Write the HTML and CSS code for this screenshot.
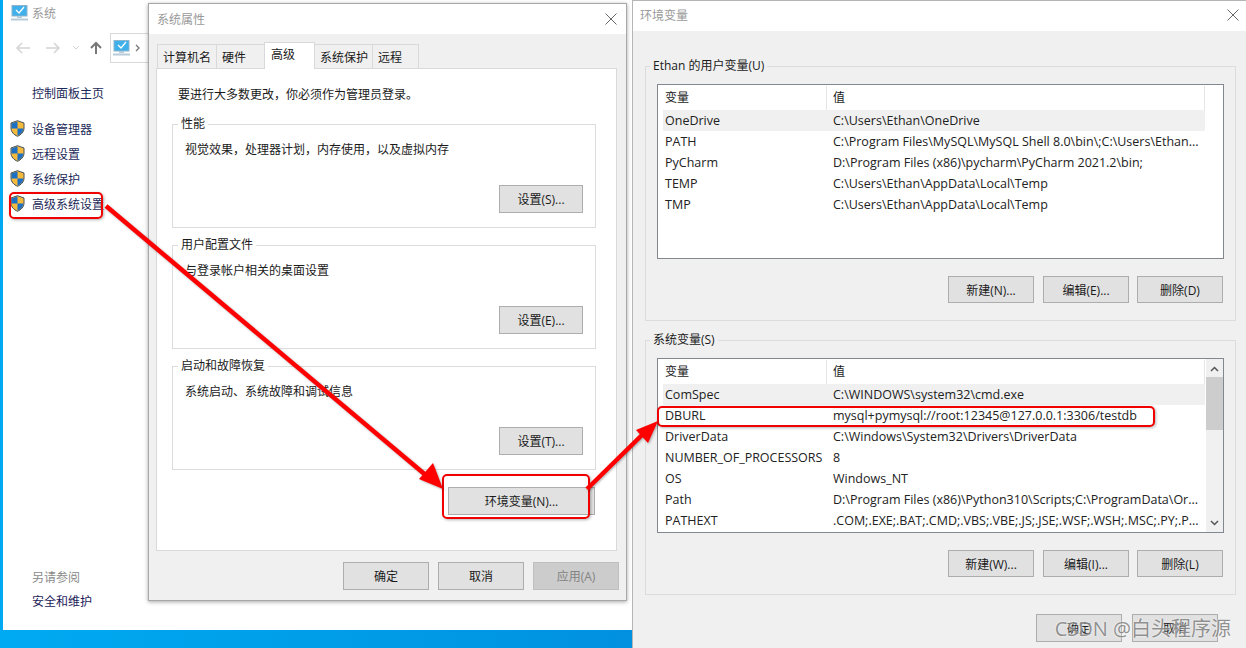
FILE: index.html
```html
<!DOCTYPE html>
<html lang="zh-CN">
<head>
    <meta charset="UTF-8">
    <title>环境变量</title>
    <link rel="stylesheet" href="styles.css">
</head>
<body>
<div class="desktop">

    <!-- 系统 window behind the dialogs -->
    <div class="window system-window">
        <div class="sys-title">
            <svg class="pc-icon" width="17" height="16" viewBox="0 0 17 16"><rect x="1" y="0.5" width="15" height="10.5" fill="#3fb0ea" stroke="#8fb4cc"/><path d="M5 5l3 3 5-6" fill="none" stroke="#fff" stroke-width="1.300"/><rect x="6" y="11" width="5" height="2" fill="#b7cbd8"/><rect x="0" y="13.5" width="17" height="2" fill="#b7cbd8"/></svg>
            <span>系统</span>
        </div>
        <div class="sys-nav">
            <svg width="100" height="16" viewBox="0 0 100 16">
                <path d="M27 8H14M19 3l-5 5 5 5M43 8h13M51 3l5 5-5 5" fill="none" stroke="#d4d4d4" stroke-width="1.5"/>
                <path d="M70 6l3 3 3-3" fill="none" stroke="#d4d4d4"/>
                <path d="M93 14V3M88 8l5-5 5 5" fill="none" stroke="#777" stroke-width="2"/>
            </svg>
            <div class="crumb">
                <svg width="17" height="16" viewBox="0 0 17 16"><rect x="1" y="0.5" width="15" height="10.5" fill="#3fb0ea" stroke="#8fb4cc"/><path d="M5 5l3 3 5-6" fill="none" stroke="#fff" stroke-width="1.300"/><rect x="6" y="11" width="5" height="2" fill="#b7cbd8"/><rect x="0" y="13.5" width="17" height="2" fill="#b7cbd8"/></svg>
                <svg width="6" height="8" viewBox="0 0 6 8"><path d="M1 1l3 3-3 3" fill="none" stroke="#777" stroke-width="1.3"/></svg>
            </div>
        </div>
        <div class="side-home">控制面板主页</div>
        <ul class="side-list">
            <li><svg class="shield" width="15" height="17" viewBox="0 0 15 17"><path d="M7.5.7L14 3v5c0 4-3 6.800-6.500 8.300C4 14.800 1 12 1 8V3z" fill="#f5b93b" stroke="#44505c"/><path d="M7.500 1.500V8.500H1.500V3.400zM7.500 8.500H13.500C13 12 10.500 14.500 7.500 15.800z" fill="#1b6fc4"/></svg>设备管理器</li>
            <li><svg class="shield" width="15" height="17" viewBox="0 0 15 17"><path d="M7.5.7L14 3v5c0 4-3 6.800-6.500 8.300C4 14.800 1 12 1 8V3z" fill="#f5b93b" stroke="#44505c"/><path d="M7.500 1.500V8.500H1.500V3.400zM7.500 8.500H13.500C13 12 10.500 14.500 7.500 15.800z" fill="#1b6fc4"/></svg>远程设置</li>
            <li><svg class="shield" width="15" height="17" viewBox="0 0 15 17"><path d="M7.5.7L14 3v5c0 4-3 6.800-6.500 8.300C4 14.800 1 12 1 8V3z" fill="#f5b93b" stroke="#44505c"/><path d="M7.500 1.500V8.500H1.500V3.400zM7.500 8.500H13.500C13 12 10.500 14.500 7.500 15.800z" fill="#1b6fc4"/></svg>系统保护</li>
            <li><svg class="shield" width="15" height="17" viewBox="0 0 15 17"><path d="M7.5.7L14 3v5c0 4-3 6.800-6.500 8.300C4 14.800 1 12 1 8V3z" fill="#f5b93b" stroke="#44505c"/><path d="M7.500 1.500V8.500H1.500V3.400zM7.500 8.500H13.500C13 12 10.500 14.500 7.500 15.800z" fill="#1b6fc4"/></svg>高级系统设置</li>
        </ul>
        <div class="side-foot">
            <div class="see-also">另请参阅</div>
            <div class="foot-link">安全和维护</div>
        </div>
    </div>

    <!-- 系统属性 -->
    <div class="window props-dialog">
        <div class="title-bar">
            <span>系统属性</span>
            <svg class="close-x" width="12" height="12" viewBox="0 0 12 12"><path d="M.5.5l11 11M11.500.5l-11 11" stroke="#666" fill="none"/></svg>
        </div>
        <div class="props-body">
            <div class="tabs">
                <div class="tab tab-name">计算机名</div>
                <div class="tab tab-hw">硬件</div>
                <div class="tab tab-active">高级</div>
                <div class="tab tab-prot">系统保护</div>
                <div class="tab tab-remote">远程</div>
            </div>
            <div class="tab-panel">
                <p class="admin-note">要进行大多数更改，你必须作为管理员登录。</p>
                <fieldset class="prop-group first-group">
                    <legend>性能</legend>
                    <p>视觉效果，处理器计划，内存使用，以及虚拟内存</p>
                    <button class="btn">设置(S)...</button>
                </fieldset>
                <fieldset class="prop-group">
                    <legend>用户配置文件</legend>
                    <p>与登录帐户相关的桌面设置</p>
                    <button class="btn">设置(E)...</button>
                </fieldset>
                <fieldset class="prop-group">
                    <legend>启动和故障恢复</legend>
                    <p>系统启动、系统故障和调试信息</p>
                    <button class="btn">设置(T)...</button>
                </fieldset>
                <div class="env-row"><button class="btn env-btn">环境变量(N)...</button></div>
            </div>
            <div class="dialog-actions">
                <button class="btn">确定</button>
                <button class="btn">取消</button>
                <button class="btn btn-disabled">应用(A)</button>
            </div>
        </div>
    </div>

    <!-- 环境变量 -->
    <div class="window env-dialog">
        <div class="title-bar env-title">
            <span>环境变量</span>
            <svg class="close-x" width="12" height="12" viewBox="0 0 12 12"><path d="M.5.5l11 11M11.500.5l-11 11" stroke="#666" fill="none"/></svg>
        </div>
        <div class="env-body">
            <fieldset class="var-group">
                <legend>Ethan 的用户变量(U)</legend>
                <div class="var-list">
                    <div class="var-head"><span>变量</span><span>值</span></div>
                    <div class="var-row selected"><span>OneDrive</span><span>C:\Users\Ethan\OneDrive</span></div>
                    <div class="var-row"><span>PATH</span><span>C:\Program Files\MySQL\MySQL Shell 8.0\bin\;C:\Users\Ethan...</span></div>
                    <div class="var-row"><span>PyCharm</span><span>D:\Program Files (x86)\pycharm\PyCharm 2021.2\bin;</span></div>
                    <div class="var-row"><span>TEMP</span><span>C:\Users\Ethan\AppData\Local\Temp</span></div>
                    <div class="var-row"><span>TMP</span><span>C:\Users\Ethan\AppData\Local\Temp</span></div>
                </div>
                <div class="var-actions">
                    <button class="btn">新建(N)...</button>
                    <button class="btn">编辑(E)...</button>
                    <button class="btn">删除(D)</button>
                </div>
            </fieldset>
            <fieldset class="var-group sys-group">
                <legend>系统变量(S)</legend>
                <div class="var-list">
                    <div class="var-head"><span>变量</span><span>值</span></div>
                    <div class="var-row selected"><span>ComSpec</span><span>C:\WINDOWS\system32\cmd.exe</span></div>
                    <div class="var-row"><span>DBURL</span><span>mysql+pymysql://root:12345@127.0.0.1:3306/testdb</span></div>
                    <div class="var-row"><span>DriverData</span><span>C:\Windows\System32\Drivers\DriverData</span></div>
                    <div class="var-row"><span>NUMBER_OF_PROCESSORS</span><span>8</span></div>
                    <div class="var-row"><span>OS</span><span>Windows_NT</span></div>
                    <div class="var-row"><span>Path</span><span>D:\Program Files (x86)\Python310\Scripts;C:\ProgramData\Or...</span></div>
                    <div class="var-row"><span>PATHEXT</span><span>.COM;.EXE;.BAT;.CMD;.VBS;.VBE;.JS;.JSE;.WSF;.WSH;.MSC;.PY;.P...</span></div>
                    <div class="scrollbar">
                        <svg width="9" height="6" viewBox="0 0 9 6"><path d="M1 5l3.500-3.500L8 5" fill="none" stroke="#555" stroke-width="1.500"/></svg>
                        <div class="scroll-thumb"></div>
                        <svg class="scroll-down" width="9" height="6" viewBox="0 0 9 6"><path d="M1 1l3.500 3.500L8 1" fill="none" stroke="#555" stroke-width="1.500"/></svg>
                    </div>
                </div>
                <div class="var-actions">
                    <button class="btn">新建(W)...</button>
                    <button class="btn">编辑(I)...</button>
                    <button class="btn">删除(L)</button>
                </div>
            </fieldset>
            <div class="env-actions">
                <button class="btn">确定</button>
                <button class="btn">取消</button>
            </div>
        </div>
    </div>

    <!-- red annotations drawn over the screenshot -->
    <div class="mark mark-side"></div>
    <div class="mark mark-env"></div>
    <div class="mark mark-db"></div>
    <svg class="arrows" width="1246" height="648" viewBox="0 0 1246 648">
        <path d="M106 206L428 477" stroke="#f00" stroke-width="4.500" fill="none"/>
        <path d="M443 489L419 479L433 463z" fill="#f00"/>
        <path d="M587 489L644 433" stroke="#f00" stroke-width="4.500" fill="none"/>
        <path d="M658 421L636 430L648 443z" fill="#f00"/>
    </svg>
    <div class="watermark">CSDN @白头程序源</div>
</div>
</body>
</html>
```

FILE: styles.css
```css
* {
    box-sizing: border-box;
}

html, body {
    margin: 0;
    padding: 0;
}

body {
    font-family: "Open Sans", "Noto Sans CJK SC", sans-serif;
    font-size: 12px;
    color: #1a1a1a;
}

.desktop {
    position: relative;
    width: 1246px;
    height: 648px;
    overflow: hidden;
    background: linear-gradient(90deg, #00aaf2 0%, #0094e2 45%, #0a6fc4 100%);
}

.window {
    position: absolute;
}

/* system window */
.system-window {
    left: 3px;
    top: 0;
    width: 660px;
    height: 630px;
    background: #ffffff;
}

.sys-title {
    display: flex;
    align-items: center;
    gap: 4px;
    height: 26px;
    padding-left: 8px;
    color: #999999;
}

.sys-nav {
    display: flex;
    align-items: center;
    gap: 7px;
    height: 30px;
    margin-top: 7px;
}

.crumb {
    display: flex;
    align-items: center;
    gap: 5px;
    width: 50px;
    height: 30px;
    padding-left: 2px;
    border: 1px solid #d9d9d9;
}

.side-home {
    margin: 21px 0 0 29px;
    height: 20px;
    line-height: 20px;
    color: #1c2a5a;
}

.side-list {
    list-style: none;
    margin: 12px 0 0;
    padding: 0 0 0 7px;
}

.side-list li {
    display: flex;
    align-items: center;
    gap: 7px;
    height: 25px;
    color: #1c2a5a;
}

.side-foot {
    margin: 352px 0 0 29px;
}

.see-also {
    color: #8a8a8a;
    height: 24px;
    line-height: 20px;
}

.foot-link {
    color: #1c1c5a;
    line-height: 20px;
}

/* shared dialog parts */
.title-bar {
    display: flex;
    align-items: center;
    justify-content: space-between;
    height: 31px;
    padding: 0 10px 0 8px;
    background: #ffffff;
    color: #999999;
}

fieldset {
    margin: 0;
    border: 1px solid #dcdcdc;
}

legend {
    padding: 0 3px;
    font-size: 12px;
    line-height: 16px;
}

.btn {
    width: 86px;
    height: 28px;
    padding: 0;
    background: #e1e1e1;
    border: 1px solid #adadad;
    font-family: inherit;
    font-size: 12px;
    color: #1a1a1a;
}

.btn-disabled {
    background: #cccccc;
    border-color: #bfbfbf;
    color: #838383;
}

/* system properties */
.props-dialog {
    left: 148px;
    top: 3px;
    width: 479px;
    height: 598px;
    background: #f0f0f0;
    border: 1px solid #a8a8a8;
    box-shadow: 0 1px 4px rgba(0, 0, 0, 0.35);
}

.props-dialog .title-bar {
    height: 30px;
    padding-right: 9px;
}

.props-body {
    padding: 6px 7px 0;
}

.tabs {
    display: flex;
    height: 28px;
    align-items: flex-end;
    padding-left: 2px;
}

.tab {
    height: 24px;
    padding-left: 5px;
    line-height: 25px;
    background: #f0f0f0;
    border: 1px solid #d9d9d9;
    border-bottom: none;
    margin-left: -1px;
}

.tab-name { width: 60px; }
.tab-hw { width: 49px; }
.tab-prot { width: 59px; }
.tab-remote { width: 47px; }

.tab-active {
    position: relative;
    width: 51px;
    height: 27px;
    line-height: 23px;
    padding-left: 6px;
    background: #ffffff;
    margin-bottom: -1px;
}

.tab-panel {
    width: 461px;
    height: 483px;
    background: #ffffff;
    border: 1px solid #d9d9d9;
    padding: 0 20px 0 15px;
}

.admin-note {
    margin: 17px 0 12px 6px;
    line-height: 18px;
}

.prop-group {
    position: relative;
    height: 112px;
    margin: 9px 0 0;
    padding: 0;
}

.first-group {
    margin-top: 0;
}

.prop-group legend {
    margin-left: 5px;
}

.prop-group p {
    margin: 8px 0 0 12px;
    line-height: 20px;
}

.prop-group .btn {
    position: absolute;
    right: 12px;
    top: 53px;
    width: 84px;
}

.env-row {
    display: flex;
    justify-content: flex-end;
    margin: 17px 1px 0 0;
}

.env-btn {
    width: 147px;
}

.dialog-actions {
    display: flex;
    justify-content: flex-end;
    gap: 9px;
    margin: 11px 0 0;
    padding-right: 0;
}

/* environment variables */
.env-dialog {
    left: 632px;
    top: 0;
    width: 614px;
    height: 648px;
    background: #f0f0f0;
    border-left: 1px solid #b5b5b5;
    border-top: 1px solid #b5b5b5;
}

.env-title {
    height: 30px;
    padding: 0 7px 2px 7px;
}

.env-body {
    padding: 27px 10px 0 12px;
}

.var-group {
    height: 263px;
    padding: 0 11px;
}

.var-group legend {
    margin-left: -7px;
}

.sys-group {
    margin-top: 11px;
}

.var-list {
    position: relative;
    height: 175px;
    margin-top: 10px;
    padding: 1px 18px 0 5px;
    background: #ffffff;
    border: 1px solid #828790;
}

.var-head,
.var-row {
    display: grid;
    white-space: nowrap;
}

.var-head {
    grid-template-columns: 163px 1fr;
    height: 24px;
    line-height: 24px;
}

.var-head span {
    padding-left: 2px;
}

.var-head span + span {
    padding-left: 6px;
    border-left: 1px solid #e5e5e5;
    border-right: 1px solid #e5e5e5;
}

.var-row {
    grid-template-columns: 170px 1fr;
    height: 21px;
    line-height: 21px;
    font-size: 12.5px;
    color: #222222;
}

.var-row span {
    padding-left: 2px;
    overflow: hidden;
}

.var-row span + span {
    padding-left: 0;
    margin-left: 0;
}

.selected {
    background: #f0f0f0;
}

.scrollbar {
    position: absolute;
    top: 0;
    right: 0;
    width: 17px;
    height: 173px;
    background: #f0f0f0;
    display: flex;
    flex-direction: column;
    align-items: center;
    padding-top: 7px;
}

.scroll-thumb {
    width: 17px;
    height: 53px;
    margin-top: 5px;
    background: #cdcdcd;
}

.scroll-down {
    margin-top: auto;
    margin-bottom: 6px;
}

.var-actions {
    display: flex;
    justify-content: flex-end;
    gap: 8px;
    margin: 17px 1px 0 0;
}

.var-actions .btn {
    height: 27px;
}

.var-actions .btn:first-child {
    margin-right: 1px;
}

.env-actions {
    display: flex;
    justify-content: flex-end;
    gap: 10px;
    margin: 19px 18px 0 0;
}

.env-actions .btn {
    width: 86px;
}

/* annotations */
.mark {
    position: absolute;
    border: 2px solid #f00000;
    border-radius: 5px;
    box-shadow: 1px 1px 3px rgba(0, 0, 0, 0.3);
}

.mark-side {
    left: 9px;
    top: 192px;
    width: 94px;
    height: 27px;
}

.mark-env {
    left: 442px;
    top: 474px;
    width: 148px;
    height: 45px;
}

.mark-db {
    left: 657px;
    top: 406px;
    width: 498px;
    height: 21px;
}

.arrows {
    position: absolute;
    left: 0;
    top: 0;
    filter: drop-shadow(1px 1px 1px rgba(0, 0, 0, 0.3));
}

.watermark {
    position: absolute;
    right: 15px;
    bottom: 6px;
    font-size: 20px;
    color: rgba(110, 110, 110, 0.75);
    text-shadow: 0 0 2px #ffffff;
    white-space: nowrap;
}
```
